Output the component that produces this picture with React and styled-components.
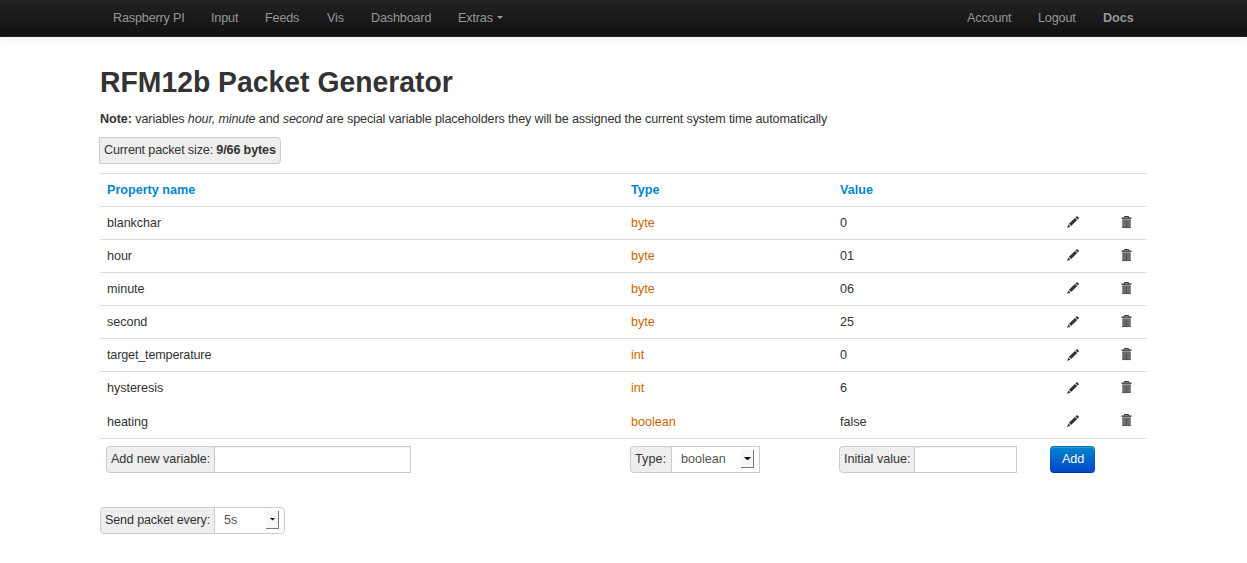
import React from 'react';
import styled, { createGlobalStyle } from 'styled-components';

const GlobalStyle = createGlobalStyle`
  * { box-sizing: border-box; }
  body {
    margin: 0;
    background: #fff;
    color: #333;
    font: 12.6px/18px "Liberation Sans", Arial, sans-serif;
    letter-spacing: -0.15px;
  }
  b { letter-spacing: -0.04px; }
`;

const NavBar = styled.nav`
  height: 37px;
  padding: 0 100px;
  display: flex;
  justify-content: space-between;
  background: linear-gradient(#222, #111);
  border-bottom: 1px solid #252525;
  box-shadow: 0 1px 9px rgba(0, 0, 0, 0.1);
`;

const NavGroup = styled.div`
  display: flex;
`;

const NavLink = styled.a`
  height: 36px;
  width: ${(p) => p.$width}px;
  padding-left: 13px;
  line-height: 36px;
  letter-spacing: ${(p) => (p.$strong ? 0 : -0.15)}px;
  white-space: nowrap;
  color: #999;
  font-weight: ${(p) => (p.$strong ? 'bold' : 'normal')};
  text-shadow: 0 -1px 0 rgba(0, 0, 0, 0.25);
`;

const Caret = styled.span`
  display: inline-block;
  margin-left: 4px;
  vertical-align: 3px;
  border-top: 3px solid #999;
  border-left: 3px solid transparent;
  border-right: 3px solid transparent;
`;

const Page = styled.main`
  width: 1047px;
  margin: 27px 0 0 100px;
`;

const Title = styled.h2`
  margin: 0;
  font-size: 28.35px;
  line-height: 36px;
  letter-spacing: 0;
  white-space: nowrap;
  transform: scaleY(1.07);
  transform-origin: 0 75%;
`;

const Note = styled.p`
  margin: 10px 0 9px;
  white-space: nowrap;
  letter-spacing: -0.142px;
`;

const AddOn = styled.span`
  height: 27px;
  padding: 0 4px;
  line-height: 25px;
  white-space: nowrap;
  background: #eee;
  border: 1px solid #ccc;
  border-radius: 4px 0 0 4px;
  width: ${(p) => p.$width}px;
  letter-spacing: ${(p) => p.$spacing ?? -0.15}px;
`;

const SizeBadge = styled(AddOn)`
  display: block;
  margin-left: -1px;
  border-radius: 0 4px 4px 0;
  b { letter-spacing: -0.15px; }
`;

const Table = styled.div`
  margin-top: 9px;
`;

const Row = styled.div`
  display: grid;
  grid-template-columns: 524px 209px 233px 53px 28px;
  height: ${(p) => p.$height || 33}px;
  padding-top: 7px;
  border-top: 1px solid ${(p) => (p.$plain ? 'transparent' : '#ddd')};
`;

const Cell = styled.span`
  padding-left: 7px;
  color: ${(p) => p.$color || '#333'};
  letter-spacing: ${(p) => p.$spacing ?? -0.1}px;
`;

const HeadCell = styled(Cell)`
  color: #0088cc;
  font-weight: bold;
  letter-spacing: 0;
`;

const IconCell = styled.span`
  svg { display: block; }
  padding: ${(p) => p.$top}px 0 0 ${(p) => p.$left || 0}px;
`;

const FieldGroup = styled.div`
  display: flex;
  margin-left: 6px;
`;

const TextField = styled.input`
  width: ${(p) => p.$width}px;
  height: 27px;
  margin: 0 0 0 -1px;
  padding: 0 5px;
  background: #fff;
  border: 1px solid #ccc;
  border-radius: 0;
  box-shadow: inset 0 1px 1px rgba(0, 0, 0, 0.075);
`;

const SelectBox = styled.div`
  display: flex;
  justify-content: space-between;
  width: ${(p) => p.$width}px;
  height: 27px;
  margin-left: -1px;
  padding: 3px 5px 3px 9px;
  line-height: 19px;
  letter-spacing: 0;
  color: #555;
  background: #fff;
  border: 1px solid #ccc;
  border-radius: ${(p) => (p.$rounded ? '0 4px 4px 0' : '0')};
`;

const SelectButton = styled.span`
  display: flex;
  align-items: center;
  justify-content: center;
  width: 13px;
  height: 18px;
  background: #f7f7f5;
  border-right: 1px solid #777;
  border-bottom: 1px solid #777;
`;

const AddButton = styled.button`
  width: 45px;
  height: 27px;
  margin-left: -16px;
  padding: 0 0 0 1px;
  font: inherit;
  line-height: 25px;
  letter-spacing: -0.1px;
  color: #fff;
  text-shadow: 0 -1px 0 rgba(0, 0, 0, 0.25);
  background: linear-gradient(#0088cc, #0044cc) border-box;
  border: 1px solid;
  border-color: rgba(0, 0, 0, 0.1) rgba(0, 0, 0, 0.1) rgba(0, 0, 0, 0.25);
  border-radius: 4px;
  box-shadow: inset 0 1px 0 rgba(255, 255, 255, 0.2);
`;

const SendGroup = styled(FieldGroup)`
  margin: 34px 0 0;
`;

const Pencil = () => (
  <svg width="14" height="14" viewBox="0 -.3 14 14" fill="#333">
    <path d="M9.4 2.1 11 .7 13.1 2.7 11.7 4.2z" />
    <path d="M8.9 2.7 11.2 4.8 5.1 10.7 2.9 8.5z" />
    <path d="M2.3 9.1 4.5 11.3 1.1 12.6z" />
  </svg>
);

const Trash = () => (
  <svg width="12" height="13" viewBox="0 0 12 13">
    <path d="M3.5 2V.5h4V2" fill="none" stroke="#333" />
    <path d="M.5 1.3h10v1.7H.5z" fill="#555" />
    <path d="M1.5 3.6h8V12h-8z" fill="#888" />
    <path d="M2 4v8M4 5v6M5.5 5v6M7 5v6M9 4v8M1.5 11.6h8M1.5 4h8" stroke="#444" strokeWidth=".8" />
  </svg>
);

const Arrow = ({ size }) => (
  <svg width={size} height={size / 2} viewBox="0 0 8 4">
    <path d="M0 0h8L4 4z" fill="#000" />
  </svg>
);

const leftLinks = [
  ['Raspberry PI', 98],
  ['Input', 54],
  ['Feeds', 62],
  ['Vis', 44],
  ['Dashboard', 87],
];

const variables = [
  ['blankchar', 'byte', '0', 1, 2],
  ['hour', 'byte', '01', 1, 2],
  ['minute', 'byte', '06', 1, 2],
  ['second', 'byte', '25', 2, 2],
  ['target_temperature', 'int', '0', 2, 2],
  ['hysteresis', 'int', '6', 2, 2],
  ['heating', 'boolean', 'false', 1, 1],
];

export default function App() {
  return (
    <>
      <GlobalStyle />
      <NavBar>
        <NavGroup>
          {leftLinks.map(([label, width]) => (
            <NavLink key={label} $width={width}>{label}</NavLink>
          ))}
          <NavLink $width={72}>Extras<Caret /></NavLink>
        </NavGroup>
        <NavGroup>
          <NavLink $width={71}>Account</NavLink>
          <NavLink $width={65}>Logout</NavLink>
          <NavLink $width={57} $strong>Docs</NavLink>
        </NavGroup>
      </NavBar>
      <Page>
        <Title>RFM12b Packet Generator</Title>
        <Note>
          <b>Note:</b> variables <i>hour, minute</i> and <i>second</i> are special variable
          placeholders they will be assigned the current system time automatically
        </Note>
        <SizeBadge $width={182}>Current packet size: <b>9/66 bytes</b></SizeBadge>
        <Table>
          <Row>
            <HeadCell>Property name</HeadCell>
            <HeadCell $spacing={0.3}>Type</HeadCell>
            <HeadCell>Value</HeadCell>
          </Row>
          {variables.map(([name, type, value, pencilTop, trashTop], i) => (
            <Row key={name} $plain={i === 6} $height={i === 5 ? 34 : 33}>
              <Cell $spacing={name.includes('_') ? -0.16 : -0.05}>{name}</Cell>
              <Cell $color="#cc6600" $spacing={0}>{type}</Cell>
              <Cell $spacing={0}>{value}</Cell>
              <IconCell $top={pencilTop}><Pencil /></IconCell>
              <IconCell $top={trashTop} $left={1.5}><Trash /></IconCell>
            </Row>
          ))}
          <Row $height={35}>
            <FieldGroup>
              <AddOn $width={109} $spacing={-0.05}>Add new variable:</AddOn>
              <TextField $width={197} />
            </FieldGroup>
            <FieldGroup>
              <AddOn $width={42} $spacing={0.1}>Type:</AddOn>
              <SelectBox $width={89}>boolean<SelectButton><Arrow size={7} /></SelectButton></SelectBox>
            </FieldGroup>
            <FieldGroup>
              <AddOn $width={76} $spacing={0}>Initial value:</AddOn>
              <TextField $width={103} />
            </FieldGroup>
            <AddButton>Add</AddButton>
          </Row>
        </Table>
        <SendGroup>
          <AddOn $width={115}>Send packet every:</AddOn>
          <SelectBox $width={71} $rounded>5s<SelectButton><Arrow size={5} /></SelectButton></SelectBox>
        </SendGroup>
      </Page>
    </>
  );
}
